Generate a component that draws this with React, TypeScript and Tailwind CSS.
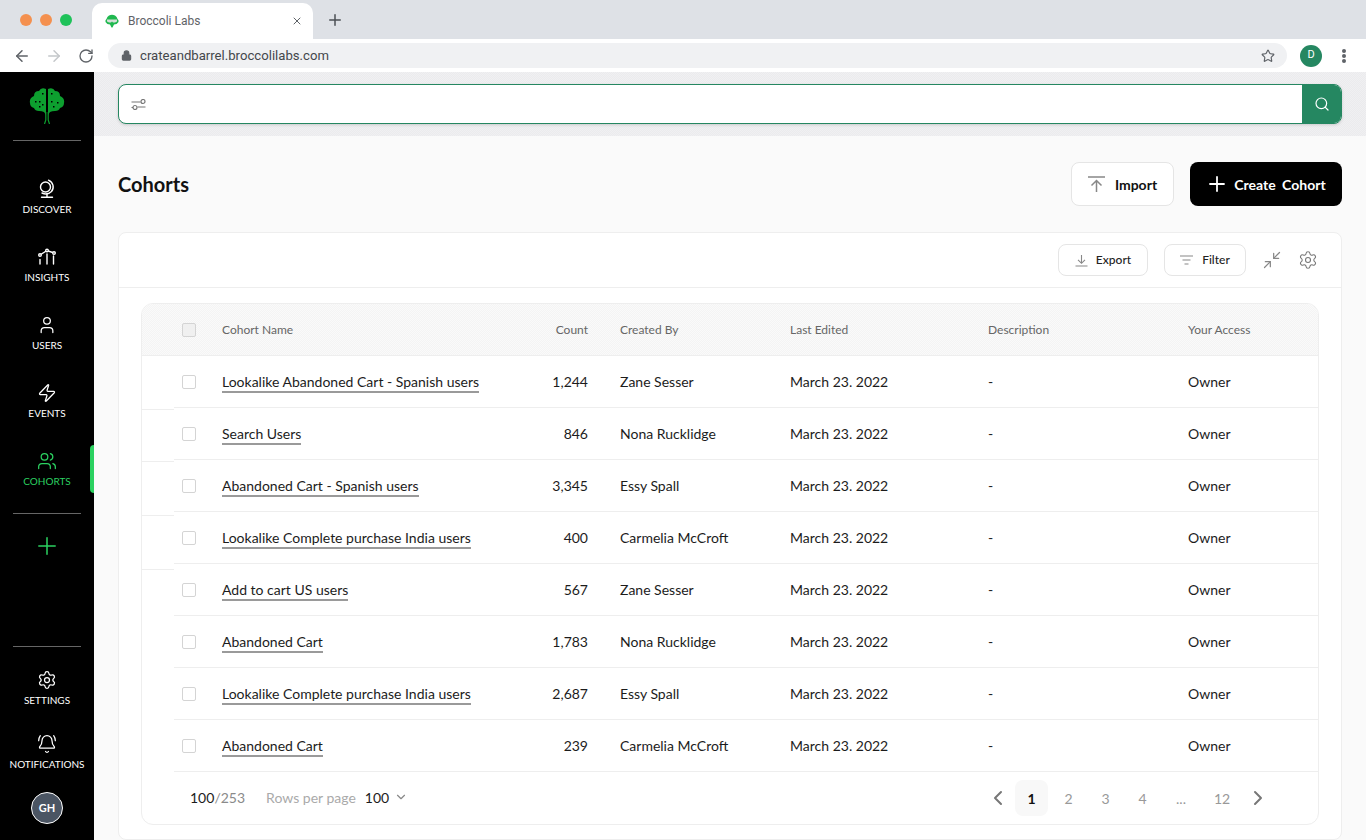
import { ArrowLeft, ArrowRight, BellRing, ChevronDown, ChevronLeft, ChevronRight, Lock, Minimize2, Plus, RotateCw, Search, Settings, Star, User, Users, X, Zap } from "lucide-react"

const ROWS = [
  ["Lookalike Abandoned Cart - Spanish users", "1,244", "Zane Sesser"],
  ["Search Users", "846", "Nona Rucklidge"],
  ["Abandoned Cart - Spanish users", "3,345", "Essy Spall"],
  ["Lookalike Complete purchase India users", "400", "Carmelia McCroft"],
  ["Add to cart US users", "567", "Zane Sesser"],
  ["Abandoned Cart", "1,783", "Nona Rucklidge"],
  ["Lookalike Complete purchase India users", "2,687", "Essy Spall"],
  ["Abandoned Cart", "239", "Carmelia McCroft"],
]

const COLS = "grid grid-cols-[48px_306px_60px_32px_170px_198px_200px_1fr] items-center"

function BroccoliLogo() {
  return (
    <svg width="36" height="36" viewBox="0 0 36 36">
      <g fill="#0d9f2f">
        <path d="M17 1Q12-1 10 3Q5 3 5 8Q0 10 1 15Q1 19 5 20Q6 23 10 23Q13 23 15 24L17 27z" />
        <path d="M19 1Q24-1 26 3Q31 3 31 8Q36 10 35 15Q35 19 31 20Q30 23 26 23Q23 23 21 24L19 27z" />
      </g>
      <path d="M16.800 24V32L15.500 36M19.200 24V32L20.500 36" fill="none" stroke="#0d9f2f" strokeWidth="1.200" />
      <g fill="#000">
        <rect x="13" y="5" width="1.500" height="1.500" />
        <rect x="22" y="5" width="1.500" height="1.500" />
        <rect x="6" y="13" width="1.500" height="1.500" />
        <rect x="10" y="13" width="1.500" height="1.500" />
        <rect x="13" y="16" width="1.500" height="1.500" />
        <rect x="10" y="18" width="1.500" height="1.500" />
        <rect x="22" y="13" width="1.500" height="1.500" />
        <rect x="28" y="14" width="1.500" height="1.500" />
        <rect x="24" y="18" width="1.500" height="1.500" />
      </g>
    </svg>
  )
}

function Favicon() {
  return (
    <svg width="14" height="14" viewBox="0 0 14 14">
      <path d="M4 1.500Q7 0 10 1.500Q12 2.500 12.500 5Q14 6 13.500 8Q12 10.500 9 10.500L7.500 13.500H6.500L5 10.500Q2 10.500.5 8Q0 6 1.500 5Q2 2.500 4 1.500z" fill="#1fb84f" />
      <path d="M2 5.500H12V7.500L10 8.500H8L7 7.500L6 8.500H4L2 7.500z" fill="#d5dfd8" />
    </svg>
  )
}

function GlobeIcon() {
  return (
    <svg width="20" height="20" viewBox="0 0 20 20" fill="none" stroke="currentColor" strokeWidth="1.400" strokeLinecap="round">
      <circle cx="8.500" cy="8" r="5" />
      <path d="M11.500 1.200C16.500 3.500 17.500 9 14.500 12.500C12 15 8 15.500 5 14" />
      <path d="M10 14.800V18M4.500 18.300H15.500" />
    </svg>
  )
}

function InsightsIcon() {
  return (
    <svg width="20" height="20" viewBox="0 0 20 20" fill="none" stroke="currentColor" strokeWidth="1.400" strokeLinecap="round">
      <path d="M3 8L10 3.500L17 6" />
      <circle cx="3" cy="8" r="1.300" fill="#000" />
      <circle cx="10" cy="3.500" r="1.300" fill="#000" />
      <circle cx="17" cy="6" r="1.300" fill="#000" />
      <path d="M3 12.500V17M10 7V17M16.500 9V17" />
    </svg>
  )
}

function NavItem({ icon, label, active }: { icon: React.ReactNode; label: string; active?: boolean }) {
  return (
    <div className={`relative h-[68px] flex flex-col items-center justify-center gap-[3px] ${active ? "text-[#2bd160]" : "text-white"}`}>
      {icon}
      <span className="text-[10px] leading-[14px]">{label}</span>
      {active && <div className="absolute right-0 top-[10px] w-1 h-12 rounded-l bg-[#2bd160]" />}
    </div>
  )
}

function Checkbox() {
  return <div className="w-[14px] h-[14px] border border-[#d4d4d4] rounded-[2px] bg-white" />
}

function Sidebar() {
  return (
    <aside className="w-[94px] shrink-0 bg-black flex flex-col">
      <div className="h-[69px] mx-[13px] border-b border-[#666] flex items-center justify-center">
        <BroccoliLogo />
      </div>
      <div className="mt-[22px]">
        <NavItem icon={<GlobeIcon />} label="DISCOVER" />
        <NavItem icon={<InsightsIcon />} label="INSIGHTS" />
        <NavItem icon={<User size={20} strokeWidth={1.500} />} label="USERS" />
        <NavItem icon={<Zap size={20} strokeWidth={1.500} />} label="EVENTS" />
        <NavItem icon={<Users size={20} strokeWidth={1.500} />} label="COHORTS" active />
      </div>
      <div className="mx-[13px] mt-[10px] border-b border-[#666]" />
      <div className="flex justify-center mt-[18px]">
        <Plus size={28} strokeWidth={1.300} className="text-[#2bd160]" />
      </div>
      <div className="mx-[13px] mt-[86px] border-b border-[#666]" />
      <div className="mt-[9px] flex flex-col">
        <div className="h-[64px] flex flex-col items-center justify-center gap-[3px] text-white">
          <Settings size={20} strokeWidth={1.500} />
          <span className="text-[10px] leading-[14px]">SETTINGS</span>
        </div>
        <div className="h-[64px] flex flex-col items-center justify-center gap-[3px] text-white">
          <BellRing size={20} strokeWidth={1.500} />
          <span className="text-[10px] leading-[14px]">NOTIFICATIONS</span>
        </div>
      </div>
      <div className="mt-[8px] flex justify-center">
        <div className="w-8 h-8 rounded-full bg-[#4b5563] border border-white flex items-center justify-center text-white text-[11px] font-bold">GH</div>
      </div>
    </aside>
  )
}

function BrowserChrome() {
  return (
    <div className="shrink-0 font-['Roboto',sans-serif]">
      <div className="h-[39px] bg-[#dee1e6] flex items-end">
        <div className="flex items-center gap-2 pl-[20px] w-[92px] self-center">
          <div className="w-3 h-3 rounded-full bg-[#f4904f]" />
          <div className="w-3 h-3 rounded-full bg-[#f4904f]" />
          <div className="w-3 h-3 rounded-full bg-[#1fc25a]" />
        </div>
        <div className="w-[221px] h-9 bg-white rounded-t-[10px] flex items-center pl-[13px] pr-[10px]">
          <Favicon />
          <span className="ml-[9px] text-[12px] text-[#5f6368] flex-1">Broccoli Labs</span>
          <X size={12} className="text-[#5f6368]" />
        </div>
        <Plus size={18} strokeWidth={2} className="text-[#4b4f54] ml-[13px] self-center" />
      </div>
      <div className="h-[33px] bg-white flex items-center">
        <ArrowLeft size={18} strokeWidth={2} className="ml-[13px] text-[#5f6368]" />
        <ArrowRight size={18} strokeWidth={2} className="ml-[14px] text-[#c4c7ca]" />
        <RotateCw size={16} strokeWidth={2} className="ml-[15px] text-[#5f6368]" />
        <div className="ml-[14px] w-[1179px] h-[25px] rounded-full bg-[#f0f1f3] flex items-center pl-[13px] pr-3">
          <Lock size={11} strokeWidth={2.500} fill="#5f6368" className="text-[#5f6368]" />
          <span className="ml-[8px] flex-1 text-[13.150px] text-[#44474b]">crateandbarrel.broccolilabs.com</span>
          <Star size={14} className="text-[#5f6368]" />
        </div>
        <div className="ml-[13px] w-[22px] h-[22px] rounded-full bg-[#258761] text-white text-[11px] flex items-center justify-center">D</div>
        <div className="ml-[20px] flex flex-col gap-[1px]">
          <div className="w-1 h-1 rounded-full bg-[#5f6368]" />
          <div className="w-1 h-1 rounded-full bg-[#5f6368]" />
          <div className="w-1 h-1 rounded-full bg-[#5f6368]" />
        </div>
      </div>
    </div>
  )
}

function SearchStrip() {
  return (
    <div className="h-[64px] shrink-0 bg-[repeating-conic-gradient(#ebebed_0_25%,#f0f0f2_0_50%)] bg-[length:2px_2px] px-6 flex items-center">
      <div className="flex-1 h-10 bg-white border border-[#258761] rounded-lg shadow-[0_1px_3px_rgba(0,0,0,0.15)] flex items-center overflow-hidden">
        <svg width="15" height="11" viewBox="0 0 15 11" fill="none" stroke="#777" strokeWidth="1.200" className="ml-[12px]">
          <path d="M.5 3H9.500M.5 8.500H2M6.500 8H14.500" />
          <circle cx="12" cy="2.500" r="2" />
          <circle cx="4" cy="8.500" r="2" />
        </svg>
        <div className="ml-auto w-[39px] h-10 bg-[#258761] flex items-center justify-center">
          <Search size={16} strokeWidth={1.800} className="text-white" />
        </div>
      </div>
    </div>
  )
}

function CohortTable() {
  return (
    <div className="mx-[22px] mt-[15px] h-[522px] border border-[#eeeeee] rounded-xl overflow-hidden flex flex-col text-[14px] text-[#1c1c1c]">
      <div className="h-[52px] shrink-0 bg-[repeating-conic-gradient(#f4f4f4_0_25%,#fafafa_0_50%)] bg-[length:2px_2px] border-b border-[#eeeeee] flex">
        <div className={`${COLS} ml-[32px] flex-1 text-[12px] text-[#666]`}>
          <div className="pl-[8px]"><div className="w-[14px] h-[14px] border border-[#d4d4d4] rounded-[2px] bg-[#f0f0f0]" /></div>
          <div>Cohort Name</div>
          <div className="text-right">Count</div>
          <div />
          <div>Created By</div>
          <div>Last Edited</div>
          <div>Description</div>
          <div>Your Access</div>
        </div>
      </div>
      <div className="flex flex-1">
        <div className="w-[32px] shrink-0">
          <div className="h-[54px] border-b border-[#eeeeee]" />
          <div className="h-[52px] border-b border-[#eeeeee]" />
          <div className="h-[54px] border-b border-[#eeeeee]" />
          <div className="h-[54px] border-b border-[#eeeeee]" />
        </div>
        <div className="flex-1 flex flex-col">
          {ROWS.map((row, i) => (
            <div key={i} className={`${COLS} h-[52px] border-b border-[#eeeeee]`}>
              <div className="pl-[8px]"><Checkbox /></div>
              <div><span className="border-b-2 border-[#9a9a9a] pb-[1px]">{row[0]}</span></div>
              <div className="text-right">{row[1]}</div>
              <div />
              <div>{row[2]}</div>
              <div>March 23. 2022</div>
              <div>-</div>
              <div>Owner</div>
            </div>
          ))}
          <div className="flex-1 flex items-center pl-[16px]">
            <div className="flex items-center pb-[2px]">
              <span>100<span className="text-[#8a8a8a]">/253</span></span>
              <span className="ml-[21px] text-[#aaaaaa]">Rows per page</span>
              <span className="ml-[9px]">100</span>
              <ChevronDown size={14} className="ml-[5px] text-[#888]" />
            </div>
            <div className="ml-auto mr-[48px] flex items-center text-[14px] text-[#999]">
              <ChevronLeft size={24} strokeWidth={2} className="text-[#777]" />
              <div className="ml-[5px] w-[33px] h-9 rounded-lg bg-[#f8f8f8] flex items-center justify-center font-bold text-[#111]">1</div>
              <div className="w-[41px] text-center">2</div>
              <div className="w-[33px] text-center">3</div>
              <div className="w-[41px] text-center">4</div>
              <div className="w-[36px] text-center">...</div>
              <div className="w-[46px] text-center">12</div>
              <ChevronRight size={24} strokeWidth={2} className="ml-[1px] text-[#777]" />
            </div>
          </div>
        </div>
      </div>
    </div>
  )
}

export default function App() {
  return (
    <div className="h-[840px] w-[1366px] overflow-hidden flex flex-col bg-white font-['Lato',sans-serif]">
      <BrowserChrome />
      <div className="flex flex-1 min-h-0">
        <Sidebar />
        <main className="flex-1 min-w-0 bg-[#fafafa] flex flex-col">
          <SearchStrip />
          <div className="flex-1 px-6 flex flex-col">
            <div className="h-[96px] shrink-0 flex items-center">
              <h1 className="text-[20px] font-bold text-[#111]">Cohorts</h1>
              <button className="ml-auto w-[103px] h-[44px] bg-white border border-[#e5e5e5] rounded-lg flex items-center justify-center gap-[10px] text-[14px] font-bold text-[#111]">
                <svg width="17" height="17" viewBox="0 0 17 17" fill="none" stroke="#888" strokeWidth="1.500">
                  <path d="M0 1H17M8.500 16V4.500M3.500 9.500L8.500 4.500L13.500 9.500" />
                </svg>
                Import
              </button>
              <button className="ml-4 w-[152px] h-[44px] bg-black rounded-lg flex items-center justify-center gap-[5px] pr-[1px] text-[14px] font-bold text-white">
                <Plus size={24} strokeWidth={1.800} />
                <span className="[word-spacing:3px]">Create Cohort</span>
              </button>
            </div>
            <section className="flex-1 bg-white border border-[#eeeeee] rounded-lg flex flex-col">
              <div className="h-[55px] shrink-0 border-b border-[#eeeeee] flex items-center justify-end pr-[23px]">
                <button className="w-[90px] h-8 border border-[#e5e5e5] rounded-lg flex items-center justify-center gap-[8px] text-[12px] font-medium text-[#222]">
                  <svg width="13" height="13" viewBox="0 0 13 13" fill="none" stroke="#888" strokeWidth="1.100">
                    <path d="M6.500 1V9M3 5.800L6.500 9.300L10 5.800M.5 12H12.500" />
                  </svg>
                  Export
                </button>
                <button className="ml-4 w-[82px] h-8 border border-[#e5e5e5] rounded-lg flex items-center justify-center gap-[9px] text-[12px] font-medium text-[#222]">
                  <svg width="13" height="10" viewBox="0 0 13 10" fill="none" stroke="#888" strokeWidth="1.100">
                    <path d="M0 1H13M2.500 5H10.500M4.500 9H8.500" />
                  </svg>
                  Filter
                </button>
                <Minimize2 size={20} strokeWidth={1.500} className="ml-4 text-[#888]" />
                <Settings size={20} strokeWidth={1.300} className="ml-[16px] text-[#777]" />
              </div>
              <CohortTable />
            </section>
          </div>
        </main>
      </div>
    </div>
  )
}
